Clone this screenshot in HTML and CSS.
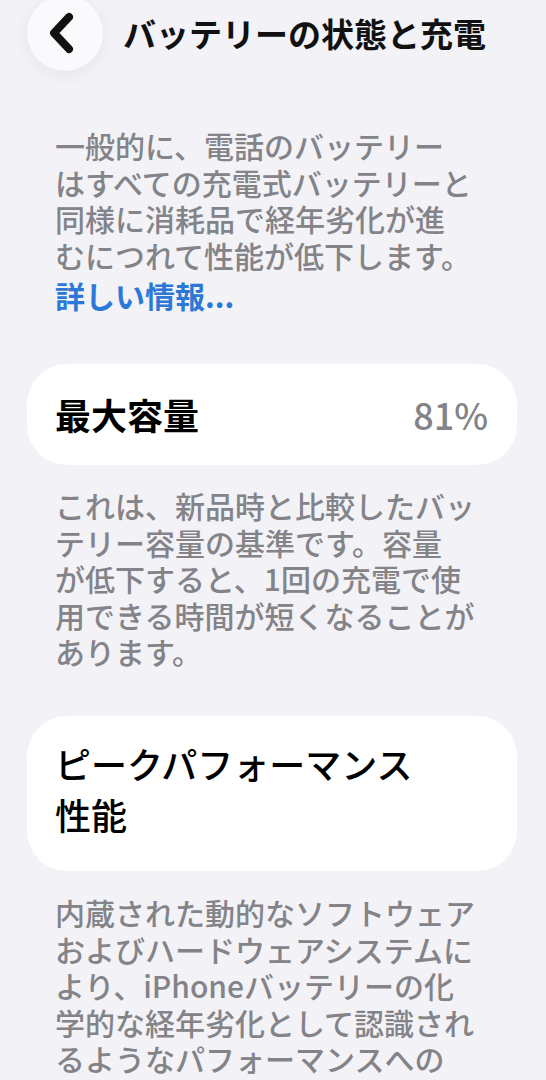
FILE: index.html
```html
<!DOCTYPE html>
<html lang="ja">
<head>
<meta charset="utf-8">
<title>バッテリーの状態と充電</title>
<link rel="stylesheet" href="styles.css">
</head>
<body>
<div class="screen">
  <header class="nav">
    <div class="back">
      <svg class="chev" width="30" height="42" viewBox="0 0 30 42"><path d="M23 5 L8 21 L23 37" fill="none" stroke="#111" stroke-width="8" stroke-linecap="round" stroke-linejoin="round"/></svg>
    </div>
    <h1 class="title">バッテリーの状態と充電</h1>
  </header>

  <p class="note note-first">一般的に、電話のバッテリー<br>はすべての充電式バッテリーと<br>同様に消耗品で経年劣化が進<br>むにつれて性能が低下します。<br><a class="link">詳しい情報...</a></p>

  <section class="card card-row">
    <span class="card-label">最大容量</span>
    <span class="card-value">81%</span>
  </section>

  <p class="note note-second">これは、新品時と比較したバッ<br>テリー容量の基準です。容量<br>が低下すると、1回の充電で使<br>用できる時間が短くなることが<br>あります。</p>

  <section class="card card-tall">
    <span class="card-title">ピークパフォーマンス<br>性能</span>
  </section>

  <p class="note note-third">内蔵された動的なソフトウェア<br>およびハードウェアシステムに<br>より、iPhoneバッテリーの化<br>学的な経年劣化として認識され<br>るようなパフォーマンスへの</p>
</div>
</body>
</html>
```

FILE: styles.css
```css
html, body {
  margin: 0;
  padding: 0;
  background: #f2f2f7;
}
body {
  font-family: "Noto Sans CJK JP", "Noto Sans", sans-serif;
  color: #000;
  overflow: hidden;
}
.screen {
  width: 546px;
  height: 1080px;
  overflow: hidden;
}
.nav {
  height: 66px;
  display: flex;
  align-items: center;
  gap: 20px;
  padding-left: 27px;
}
.back {
  width: 76px;
  height: 76px;
  flex: 0 0 76px;
  border-radius: 50%;
  background: #fafafc;
  box-shadow: 0 4px 18px rgba(0, 0, 0, 0.06);
  display: flex;
  align-items: center;
  justify-content: center;
}
.chev {
  margin-right: 8px;
}
.title {
  margin: 0;
  font-size: 33px;
  font-weight: 700;
  line-height: 40px;
  color: #111;
  white-space: nowrap;
}
.note {
  margin: 0;
  padding: 0 20px 0 55px;
  font-size: 30px;
  line-height: 36.6px;
  font-weight: 500;
  color: #838388;
  white-space: nowrap;
}
.note-first {
  margin-top: 61px;
}
.link {
  display: inline-block;
  margin-top: 4px;
  color: #2b78d6;
  font-weight: 700;
}
.card {
  margin: 0 29px 0 27px;
  background: #fff;
  border-radius: 40px;
  box-sizing: border-box;
}
.card-row {
  margin-top: 50px;
  height: 101px;
  display: flex;
  align-items: center;
  justify-content: space-between;
  padding: 0 29px 0 28px;
}
.card-label {
  font-size: 36px;
  font-weight: 700;
  color: #000;
}
.card-value {
  font-size: 36px;
  font-weight: 500;
  color: #838388;
}
.note-second {
  margin-top: 22px;
}
.card-tall {
  margin-top: 46px;
  padding: 22px 28px 31px 28px;
}
.card-title {
  display: block;
  font-size: 36px;
  line-height: 51px;
  font-weight: 500;
  color: #000;
  white-space: nowrap;
}
.note-third {
  margin-top: 23px;
}
```
